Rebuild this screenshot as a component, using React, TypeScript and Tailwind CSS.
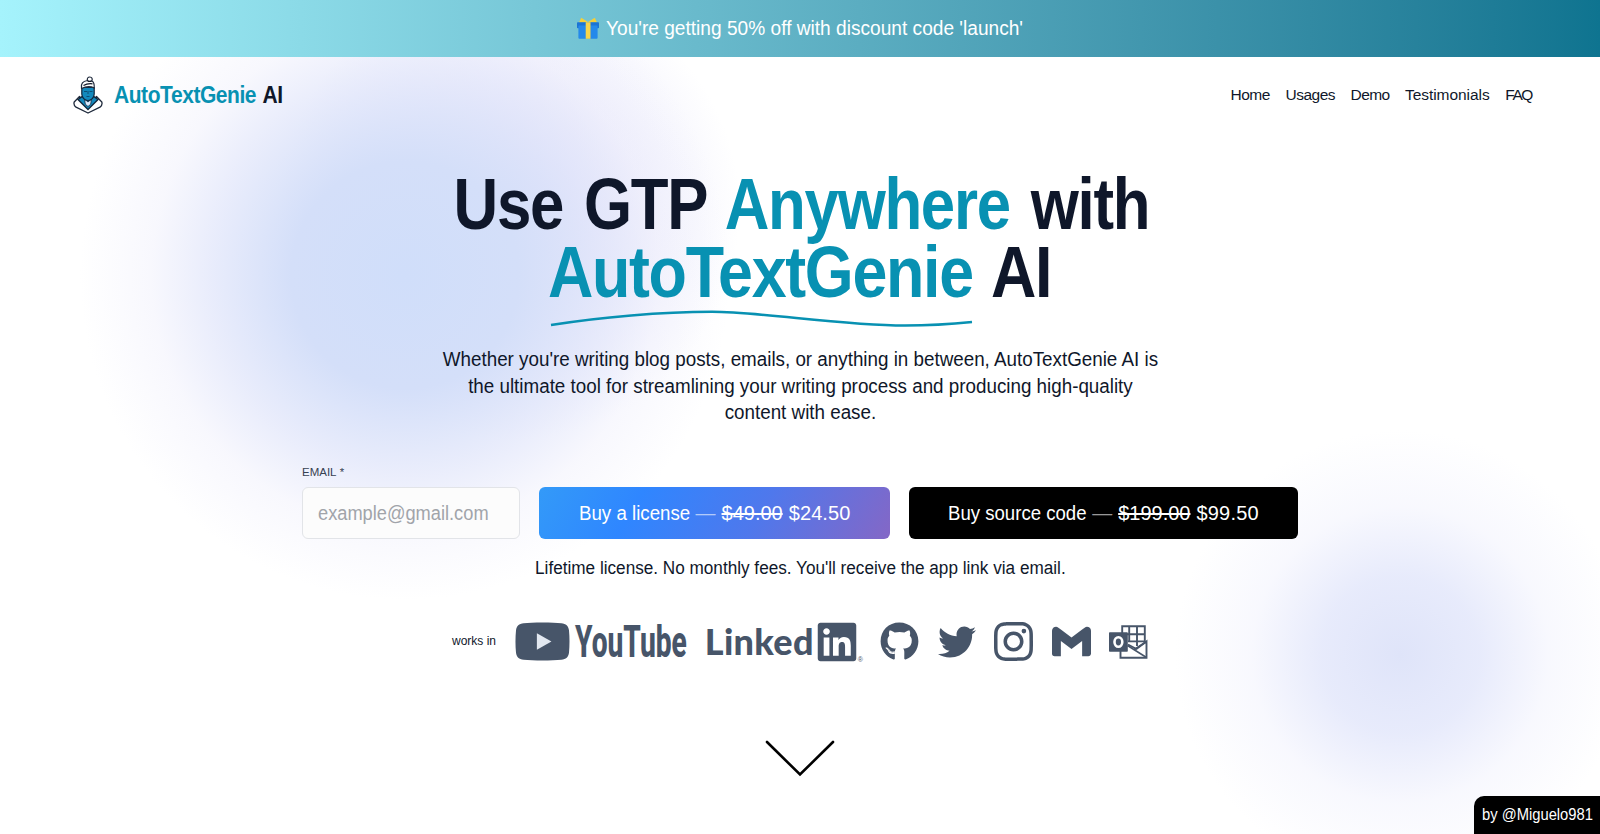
import React from "react";
import { FaGithub, FaLinkedin, FaTwitter } from "react-icons/fa";
import { SiGmail, SiInstagram } from "react-icons/si";

function GiftIcon() {
  return (
    <svg width="22" height="22" viewBox="0 0 22 22" aria-hidden="true">
      <path d="M2 5.5 4.2.8 11 5l6.8-4.2L20 5.500Z" fill="#f4d03a" />
      <rect x="0" y="5.2" width="22" height="6" rx="0.8" fill="#1b74d4" />
      <rect x="1.4" y="8.6" width="19.2" height="13.2" rx="1" fill="#2489ea" />
      <rect x="8.7" y="5.2" width="4.8" height="16.6" fill="#f7d54a" />
    </svg>
  );
}

function GenieLogo() {
  return (
    <svg width="30" height="38" viewBox="0 0 30 38" fill="none" aria-hidden="true">
      <path
        d="M6.5 20.5 1.2 26c-.6 2 .2 4 1.800 5.200L15 37l12-5.800c1.600-1.200 2.400-3.200 1.800-5.200l-5.300-5.500L15 31Z"
        fill="#fff"
        stroke="#1e293b"
        strokeWidth="1.300"
        strokeLinejoin="round"
      />
      <path d="M5 23.500 10 20h10l5 3.500L15 33.500Z" fill="#1389bd" stroke="#12263c" strokeWidth="1.300" />
      <path d="m11.500 23 3.500 3 3.500-3-.8 5.200L15 30.500l-2.700-2.300Z" fill="#dbeafe" stroke="#12263c" strokeWidth="0.800" />
      <path d="M8.800 11.500h12.400V18c0 3.500-3 6.500-6.200 6.500S8.800 21.500 8.800 18Z" fill="#1389bd" stroke="#12263c" strokeWidth="1.200" />
      <path d="M11 15.500h3M16.500 15.500h3M13.500 20.500h3M15 15v3" stroke="#0c4a6e" strokeWidth="0.900" />
      <path
        d="M8.500 12.500C7.500 7.500 10 5.200 14.500 4.500c-.8-2 .5-3.500 2.300-3.500 2.200 0 3 2 2 3.700 2 1.300 2.700 4 2.400 7.300-4-2-8.500-1.500-12.700.5Z"
        fill="#fff"
        stroke="#1e293b"
        strokeWidth="1.200"
      />
      <path d="M10.500 9.500c3-1.800 6-2 9-1.700M14.500 4.800c1.600.8 3 .6 4.300 0" stroke="#111827" strokeWidth="1.300" />
    </svg>
  );
}

function YoutubeMark() {
  return (
    <svg width="55" height="39" viewBox="0 0 54 39" preserveAspectRatio="none" className="shrink-0" aria-hidden="true">
      <path
        d="M27 .5c8 0 14 .3 18.500.7 4.600.4 7 2.800 7.500 7 .7 7.300.7 15.300 0 22.600-.5 4.200-2.900 6.600-7.500 7-9 .9-28 .9-37 0-4.600-.4-7-2.800-7.500-7-.7-7.300-.7-15.300 0-22.600.5-4.200 2.900-6.600 7.500-7C13 .8 19 .5 27 .5Z"
        fill="#475569"
      />
      <path d="M21.500 11.200v16.600l14.300-8.300Z" fill="#e2e8f0" />
    </svg>
  );
}

function OutlookMark() {
  return (
    <svg width="39" height="34" viewBox="0 0 39 34" fill="none" stroke="#475569" aria-hidden="true">
      <path d="M13.200 8V1.200h22.600V17M20.200 1v15M28 1v20M13 9.300h23M19 16.400h17" strokeWidth="1.900" />
      <path d="M11.500 26v6.800h26V16.500L27.500 24 19 19.500" fill="#fff" strokeWidth="1.900" />
      <path d="M18.500 20.500 37.500 32.500M37.500 16.500 24.500 25" strokeWidth="1.500" />
      <rect x="0" y="7.300" width="18.800" height="19.400" rx="0.800" fill="#475569" stroke="none" />
      <ellipse cx="9.400" cy="17" rx="3.900" ry="4.700" stroke="#fff" strokeWidth="2.600" />
    </svg>
  );
}

const links = [
  { label: "Home", style: "tracking-[-0.450px]" },
  { label: "Usages", style: "tracking-[-0.500px]" },
  { label: "Demo", style: "tracking-[-0.600px]" },
  { label: "Testimonials", style: "tracking-[-0.050px]" },
  { label: "FAQ", style: "tracking-[-1.400px]" },
];

export default function App() {
  return (
    <div className="relative flex h-[834px] flex-col overflow-hidden bg-white bg-[radial-gradient(circle_325px_at_405px_275px,#d0defa_0%,#d4dff9_35%,#dfe4fab0_60%,#ececfb60_78%,#ffffff00_100%),radial-gradient(circle_230px_at_510px_210px,#dcdcf8_0%,#e3e3faa0_50%,#ffffff00_100%),radial-gradient(circle_225px_at_1400px_655px,#dfe4f9_0%,#e4e8fbe0_35%,#f1f2fd80_66%,#ffffff00_100%)] font-['Liberation_Sans',Arial,sans-serif] text-[#0f172a]">
      <div className="flex h-[57px] shrink-0 items-center justify-center gap-[7px] bg-linear-to-r from-[#a5f3fc] to-[#0e7490] pb-px text-xl text-white">
        <GiftIcon />
        <p className="w-[417px] whitespace-nowrap">
          <span className="inline-block origin-left scale-x-[0.956]">
            You're getting 50% off with discount code 'launch'
          </span>
        </p>
      </div>

      <header className="flex h-[76px] shrink-0 items-center justify-between pr-[68px] pl-[73px]">
        <a className="flex items-center gap-[11px]">
          <GenieLogo />
          <span className="inline-block origin-left scale-x-[0.875] text-2xl font-bold tracking-[-0.500px] whitespace-nowrap [word-spacing:2px]">
            <span className="text-[#0891b2]">AutoTextGenie</span> AI
          </span>
        </a>
        <nav className="flex gap-[15.500px] text-[15.500px]">
          {links.map((l) => (
            <a key={l.label} className={l.style}>
              {l.label}
            </a>
          ))}
        </nav>
      </header>

      <main className="flex flex-col items-center">
        <h1 className="mt-[37px] flex flex-col items-center text-[72px] leading-[68px] font-bold tracking-[-1.500px] whitespace-nowrap">
          <span className="inline-block translate-x-[1px] scale-x-[0.858] [word-spacing:6px]">
            Use GTP <span className="text-[#0891b2]">Anywhere</span> with
          </span>
          <span className="inline-block scale-x-[0.872] [word-spacing:5px]">
            <span className="text-[#0891b2]">AutoTextGenie</span> AI
          </span>
        </h1>
        <svg className="mt-[3px] mr-[76px]" width="426" height="20" viewBox="549 309 426 20" fill="none" aria-hidden="true">
          <path
            d="M551 325C600 317 662 311.800 712 311.800 S840 325.500 905 325.500 Q938 325.500 972 322"
            stroke="#0891b2"
            strokeWidth="2.500"
          />
        </svg>
        <p className="mt-[17px] flex scale-x-[0.940] flex-col items-center text-xl leading-[26.670px] whitespace-nowrap">
          <span>Whether you're writing blog posts, emails, or anything in between, AutoTextGenie AI is</span>
          <span>the ultimate tool for streamlining your writing process and producing high-quality</span>
          <span>content with ease.</span>
        </p>

        <form className="mt-[38px] flex w-[996px] items-end gap-[19px]">
          <label className="flex w-[218px] flex-col gap-[7px]">
            <span className="text-[11.500px] leading-4 text-[#374151]">EMAIL&nbsp;*</span>
            <span className="flex h-[52px] items-center rounded-md border border-[#e2e4e8] bg-[#fcfcfc] px-[15px] text-xl text-[#a1a4aa]">
              <span className="inline-block origin-left scale-x-[0.912]">example@gmail.com</span>
            </span>
          </label>
          <button
            type="button"
            className="flex h-[52px] w-[351px] items-center justify-center gap-[6px] rounded-md bg-[linear-gradient(120deg,#339af8_0%,#2f86ff_28%,#4f78ec_62%,#8467c6_100%)] text-xl whitespace-nowrap text-white"
          >
            <span className="w-[111px]">
              <span className="inline-block origin-left scale-x-[0.935]">Buy a license</span>
            </span>
            <span className="text-white/60">—</span>
            <s className="decoration-2">$49.00</s>
            <span className="tracking-[0.100px]">$24.50</span>
          </button>
          <button
            type="button"
            className="flex h-[52px] w-[389px] items-center justify-center gap-[6px] rounded-md bg-black text-xl whitespace-nowrap text-white"
          >
            <span className="w-[138px]">
              <span className="inline-block origin-left scale-x-[0.930]">Buy source code</span>
            </span>
            <span className="text-white/60">—</span>
            <s className="decoration-2">$199.00</s>
            <span className="tracking-[0.200px]">$99.50</span>
          </button>
        </form>

        <p className="mt-[15px] scale-x-[0.953] text-lg leading-7 whitespace-nowrap">
          Lifetime license. No monthly fees. You'll receive the app link via email.
        </p>

        <div className="mt-[40px] flex h-[39px] w-[696px] items-center text-[#475569]">
          <span className="w-[63px] pb-[2px] text-xs text-[#0f172a]">works in</span>
          <div className="flex w-[191px] items-center gap-[5px]">
            <YoutubeMark />
            <span className="inline-block w-0 origin-left scale-x-[0.625] font-[Roboto] text-[45px] leading-[39px] font-extrabold">
              YouTube
            </span>
          </div>
          <div className="flex w-[176px] items-center">
            <span className="w-[110px] font-[Lato] text-[36px] leading-[39px] font-black tracking-[0.300px]">Linked</span>
            <FaLinkedin size={44} className="shrink-0" />
            <span className="-ml-[1px] self-end text-[7px] leading-[8px]">®</span>
          </div>
          <div className="flex items-center gap-[18.500px]">
            <FaGithub size={39} />
            <FaTwitter size={38} />
            <SiInstagram size={39} />
            <SiGmail size={39} />
            <OutlookMark />
          </div>
        </div>

        <svg className="mt-[79px]" width="70" height="37" viewBox="0 0 70 37" fill="none" aria-hidden="true">
          <path d="m2 2 33 32.500L68 2" stroke="#000" strokeWidth="2.600" strokeLinecap="round" />
        </svg>
      </main>

      <a className="absolute right-0 bottom-0 flex h-[38px] w-[126px] items-center rounded-tl-[10px] bg-black pl-[8px] text-base whitespace-nowrap text-white">
        <span className="inline-block w-[111px]">
          <span className="inline-block origin-left scale-x-[0.922]">by @Miguelo981</span>
        </span>
      </a>
    </div>
  );
}
